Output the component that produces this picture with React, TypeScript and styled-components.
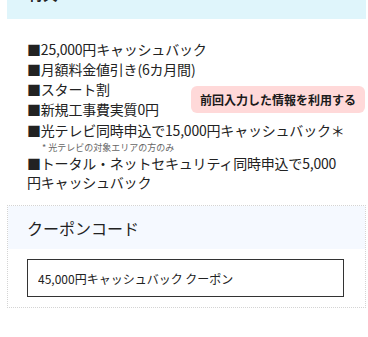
import React from "react";
import styled, { createGlobalStyle } from "styled-components";

const benefits = [
  "25,000円キャッシュバック",
  "月額料金値引き(6カ月間)",
  "スタート割",
  "新規工事費実質0円",
];

export default function App() {
  return (
    <>
      <GlobalStyle />
      <Page>
        <SectionHead>
          <HeadTitle>特典</HeadTitle>
        </SectionHead>
        <BenefitList>
          {benefits.map((b) => (
            <Benefit key={b}>■{b}</Benefit>
          ))}
          <Benefit $tight>■光テレビ同時申込で15,000円キャッシュバック＊</Benefit>
          <Note>* 光テレビの対象エリアの方のみ</Note>
          <Benefit $wrap>■トータル・ネットセキュリティ同時申込で5,000円キャッシュバック</Benefit>
        </BenefitList>
        <CouponBox>
          <CouponHead>クーポンコード</CouponHead>
          <CouponBody>
            <CouponInput readOnly value="45,000円キャッシュバック クーポン" />
          </CouponBody>
        </CouponBox>
        <ReuseButton>前回入力した情報を利用する</ReuseButton>
      </Page>
    </>
  );
}

const GlobalStyle = createGlobalStyle`
  body {
    margin: 0;
    background: #fff;
    font-family: "Noto Sans CJK JP", "Noto Sans", sans-serif;
    color: #222;
  }
`;

const Page = styled.div`
  position: relative;
  width: 368px;
  height: 337px;
  overflow: hidden;
  padding: 0 2px 0 7px;
  box-sizing: border-box;
`;

const SectionHead = styled.div`
  height: 19px;
  background: #dff5fb;
  display: flex;
  flex-direction: column;
  justify-content: flex-end;
  overflow: hidden;
  padding: 0 0 15px 21px;
  box-sizing: border-box;
`;

const HeadTitle = styled.div`
  flex-shrink: 0;
  font-size: 15px;
  font-weight: bold;
  line-height: 20px;
`;

const BenefitList = styled.div`
  padding: 20px 20px 0 20px;
  display: flex;
  flex-direction: column;
`;

const Benefit = styled.div<{ $tight?: boolean; $wrap?: boolean }>`
  font-size: 14px;
  line-height: ${(p) => (p.$wrap ? "19px" : "20px")};
  margin-top: ${(p) => (p.$tight ? "1px" : "0")};
  letter-spacing: -0.2px;
`;

const Note = styled.div`
  font-size: 9px;
  line-height: 14px;
  color: #666;
  padding-left: 15px;
  margin-top: 1px;
  margin-bottom: -1px;
`;

const CouponBox = styled.div`
  margin-top: 13px;
  border: 1px dotted #d4d4d4;
`;

const CouponHead = styled.div`
  height: 43px;
  background: #f5f9ff;
  display: flex;
  align-items: center;
  padding-left: 19px;
  font-size: 16px;
`;

const CouponBody = styled.div`
  padding: 10px 21px 10px 19px;
`;

const CouponInput = styled.input`
  display: block;
  width: 100%;
  height: 38px;
  box-sizing: border-box;
  border: 1.5px solid #333;
  padding: 0 10px;
  font-family: "Noto Sans CJK JP", "Noto Sans", sans-serif;
  font-size: 12px;
  color: #222;
  outline: none;
  background: #fff;
`;

const ReuseButton = styled.button`
  position: absolute;
  left: 191px;
  top: 86px;
  width: 174px;
  height: 27px;
  border: none;
  border-radius: 6px;
  background: #ffd9d9;
  color: #1a1a1a;
  font-family: "Noto Sans CJK JP", "Noto Sans", sans-serif;
  font-size: 12px;
  font-weight: bold;
  padding: 0;
`;
